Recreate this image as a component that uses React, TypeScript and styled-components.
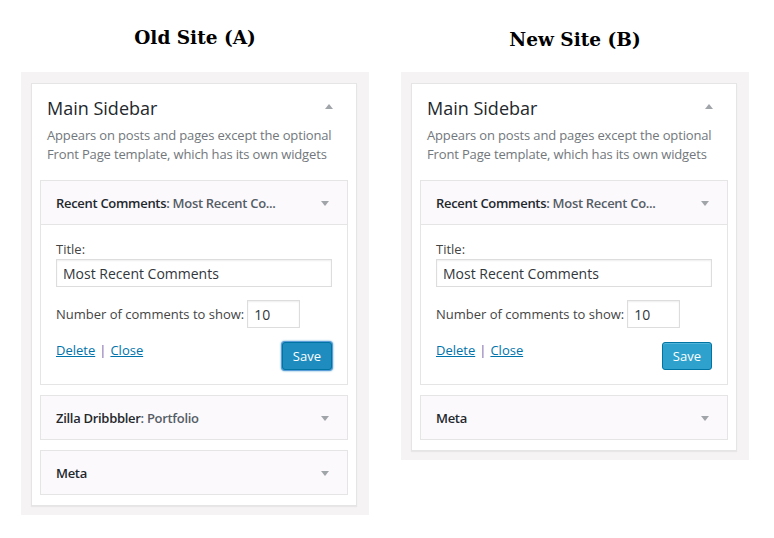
import React from "react";
import styled, { createGlobalStyle } from "styled-components";

const GlobalStyle = createGlobalStyle`
  body {
    margin: 0;
    background: #ffffff;
    font-family: "Open Sans", "Liberation Sans", sans-serif;
  }
`;

interface WidgetProps {
  title: string;
  subtitle?: string;
  open?: boolean;
  focused?: boolean;
}

const Widget: React.FC<WidgetProps> = ({ title, subtitle, open, focused }) => (
  <WidgetBox>
    <WidgetTop>
      <WidgetTitle>
        {title}
        {subtitle && <InTitle>: {subtitle}</InTitle>}
      </WidgetTitle>
      <Arrow />
    </WidgetTop>
    {open && (
      <WidgetInside>
        <Label>Title:</Label>
        <TextInput defaultValue="Most Recent Comments" />
        <NumberRow>
          <span>Number of comments to show:</span>
          <NumberInput defaultValue="10" />
        </NumberRow>
        <Actions>
          <Links>
            <LinkText>Delete</LinkText>
            <Sep>|</Sep>
            <LinkText>Close</LinkText>
          </Links>
          <SaveButton $focused={focused}>Save</SaveButton>
        </Actions>
      </WidgetInside>
    )}
  </WidgetBox>
);

interface SidebarProps {
  heading: string;
  old?: boolean;
}

const SidebarColumn: React.FC<SidebarProps> = ({ heading, old }) => (
  <Column>
    <Heading $old={old}>{heading}</Heading>
    <Holder>
      <Card>
        <CardHead>
          <CardTitle>Main Sidebar</CardTitle>
          <Arrow $up />
        </CardHead>
        <Description>
          Appears on posts and pages except the optional Front Page template,
          which has its own widgets
        </Description>
        <WidgetList>
          <Widget
            title="Recent Comments"
            subtitle="Most Recent Co..."
            open
            focused={old}
          />
          {old && <Widget title="Zilla Dribbbler" subtitle="Portfolio" />}
          <Widget title="Meta" />
        </WidgetList>
      </Card>
    </Holder>
  </Column>
);

export default function App() {
  return (
    <>
      <GlobalStyle />
      <Page>
        <SidebarColumn heading="Old Site (A)" old />
        <SidebarColumn heading="New Site (B)" />
      </Page>
    </>
  );
}

const Page = styled.div`
  display: flex;
  align-items: flex-start;
  gap: 32px;
  padding-left: 21px;
`;

const Column = styled.div`
  display: flex;
  flex-direction: column;
  width: 348px;
`;

const Heading = styled.h2<{ $old?: boolean }>`
  margin: 0;
  height: 72px;
  padding-top: ${(p) => (p.$old ? "26px" : "28px")};
  box-sizing: border-box;
  text-align: center;
  font-family: "DejaVu Serif", "Liberation Serif", serif;
  font-weight: bold;
  font-size: 18.5px;
  line-height: 24px;
  color: #000;
`;

const Holder = styled.div`
  background: #f6f3f5;
  padding: 11px 12px 9px 10px;
`;

const Card = styled.div`
  background: #fff;
  border: 1px solid #e5e5e5;
  box-shadow: 0 1px 1px rgba(0, 0, 0, 0.05);
  padding: 12px 8px 10px;
`;

const CardHead = styled.div`
  display: flex;
  align-items: center;
  justify-content: space-between;
  padding: 0 15px 0 7px;
`;

const CardTitle = styled.h3`
  margin: 0;
  font-size: 18px;
  font-weight: 400;
  line-height: 24px;
  color: #23282d;
`;

const Arrow = styled.span<{ $up?: boolean }>`
  width: 0;
  height: 0;
  border-left: 4px solid transparent;
  border-right: 4px solid transparent;
  ${(p) =>
    p.$up
      ? "border-bottom: 5px solid #a0a5aa; margin-top: -4px;"
      : "border-top: 5px solid #a0a5aa; margin-top: 2px;"}
`;

const Description = styled.p`
  margin: 6px 0 0;
  padding: 0 0 0 7px;
  font-size: 13px;
  letter-spacing: -0.15px;
  line-height: 19px;
  color: #72777c;
`;

const WidgetList = styled.div`
  display: flex;
  flex-direction: column;
  gap: 10px;
  margin-top: 16px;
`;

const WidgetBox = styled.div`
  border: 1px solid #e5e5e5;
  background: #fff;
`;

const WidgetTop = styled.div`
  display: flex;
  align-items: center;
  justify-content: space-between;
  height: 43px;
  padding: 0 18px 0 15px;
  background: #fcf9fc;
`;

const WidgetTitle = styled.h4`
  margin: 0;
  font-size: 13px;
  font-weight: 600;
  letter-spacing: -0.3px;
  color: #23282d;
`;

const InTitle = styled.span`
  color: #555d66;
`;

const WidgetInside = styled.div`
  border-top: 1px solid #e5e5e5;
  padding: 15px 15px 14px;
  font-size: 13px;
  color: #444;
`;

const Label = styled.div`
  line-height: 19px;
`;

const TextInput = styled.input`
  display: block;
  width: 100%;
  box-sizing: border-box;
  height: 28px;
  margin: 0;
  padding: 0 6px;
  border: 1px solid #ddd;
  box-shadow: inset 0 1px 2px rgba(0, 0, 0, 0.07);
  font-family: inherit;
  font-size: 14px;
  color: #32373c;
  outline: none;
`;

const NumberRow = styled.label`
  display: flex;
  align-items: center;
  gap: 3px;
  margin-top: 13px;
`;

const NumberInput = styled(TextInput)`
  width: 53px;
`;

const Actions = styled.div`
  display: flex;
  justify-content: space-between;
  align-items: flex-start;
  margin-top: 14px;
`;

const Links = styled.div`
  display: flex;
  gap: 4px;
  line-height: 16px;
`;

const LinkText = styled.span`
  color: #0073aa;
  text-decoration: underline;
`;

const Sep = styled.span`
  color: #7b5aa6;
`;

const SaveButton = styled.button<{ $focused?: boolean }>`
  height: 28px;
  padding: 0 10px;
  border-radius: 3px;
  border: 1px solid #0074a2;
  font-family: inherit;
  font-size: 13px;
  color: #fff;
  background: ${(p) => (p.$focused ? "#1e8cbe" : "#2ea2cc")};
  box-shadow: ${(p) =>
    p.$focused
      ? "0 0 0 1px #5b9dd9, 0 0 2px 1px rgba(30, 140, 190, 0.8)"
      : "inset 0 1px 0 rgba(120, 200, 230, 0.5)"};
`;
